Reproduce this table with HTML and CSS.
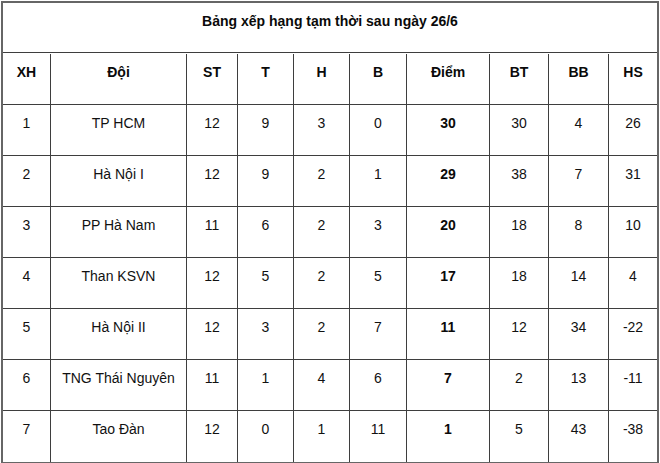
FILE: index.html
```html
<!DOCTYPE html>
<html lang="vi">
<head>
<meta charset="utf-8">
<title>Bảng xếp hạng</title>
<link rel="stylesheet" href="styles.css">
</head>
<body>
<div class="standings">
  <div class="title">Bảng xếp hạng tạm thời sau ngày 26/6</div>

  <div class="cell head">XH</div>
  <div class="cell head">Đội</div>
  <div class="cell head">ST</div>
  <div class="cell head">T</div>
  <div class="cell head">H</div>
  <div class="cell head">B</div>
  <div class="cell head">Điểm</div>
  <div class="cell head">BT</div>
  <div class="cell head">BB</div>
  <div class="cell head last-col">HS</div>

  <div class="cell">1</div><div class="cell">TP HCM</div><div class="cell">12</div><div class="cell">9</div><div class="cell">3</div><div class="cell">0</div><div class="cell pts">30</div><div class="cell">30</div><div class="cell">4</div><div class="cell last-col">26</div>

  <div class="cell">2</div><div class="cell">Hà Nội I</div><div class="cell">12</div><div class="cell">9</div><div class="cell">2</div><div class="cell">1</div><div class="cell pts">29</div><div class="cell">38</div><div class="cell">7</div><div class="cell last-col">31</div>

  <div class="cell">3</div><div class="cell">PP Hà Nam</div><div class="cell">11</div><div class="cell">6</div><div class="cell">2</div><div class="cell">3</div><div class="cell pts">20</div><div class="cell">18</div><div class="cell">8</div><div class="cell last-col">10</div>

  <div class="cell">4</div><div class="cell">Than KSVN</div><div class="cell">12</div><div class="cell">5</div><div class="cell">2</div><div class="cell">5</div><div class="cell pts">17</div><div class="cell">18</div><div class="cell">14</div><div class="cell last-col">4</div>

  <div class="cell">5</div><div class="cell">Hà Nội II</div><div class="cell">12</div><div class="cell">3</div><div class="cell">2</div><div class="cell">7</div><div class="cell pts">11</div><div class="cell">12</div><div class="cell">34</div><div class="cell last-col">-22</div>

  <div class="cell">6</div><div class="cell">TNG Thái Nguyên</div><div class="cell">11</div><div class="cell">1</div><div class="cell">4</div><div class="cell">6</div><div class="cell pts">7</div><div class="cell">2</div><div class="cell">13</div><div class="cell last-col">-11</div>

  <div class="cell last-row">7</div><div class="cell last-row">Tao Đàn</div><div class="cell last-row">12</div><div class="cell last-row">0</div><div class="cell last-row">1</div><div class="cell last-row">11</div><div class="cell last-row pts">1</div><div class="cell last-row">5</div><div class="cell last-row">43</div><div class="cell last-row last-col">-38</div>
</div>
</body>
</html>
```

FILE: styles.css
```css
html, body {
  margin: 0;
  padding: 0;
  background: #ffffff;
}

body {
  padding: 1px 0 0 1px;
  font-family: "Liberation Sans", Arial, sans-serif;
  font-size: 14px;
  line-height: 16px;
  color: #111111;
}

.standings {
  display: grid;
  grid-template-columns: 48px 136px 51px 56px 56px 57px 83px 59px 60px 48px;
  grid-auto-rows: 51px;
  width: max-content;
  border: 2px solid #666666;
  box-sizing: content-box;
}

.title {
  grid-column: 1 / -1;
  height: 50px;
  box-sizing: border-box;
  padding-top: 10px;
  text-align: center;
  font-weight: bold;
  color: #0a0a0a;
  border-bottom: 1px solid #3e3e3e;
}

.cell {
  box-sizing: border-box;
  padding-top: 10px;
  text-align: center;
  white-space: nowrap;
  border-right: 1px solid #3e3e3e;
  border-bottom: 1px solid #3e3e3e;
}

.head,
.pts {
  font-weight: bold;
  color: #0a0a0a;
}

.last-col {
  border-right: none;
}

.last-row {
  border-bottom: none;
}
```
